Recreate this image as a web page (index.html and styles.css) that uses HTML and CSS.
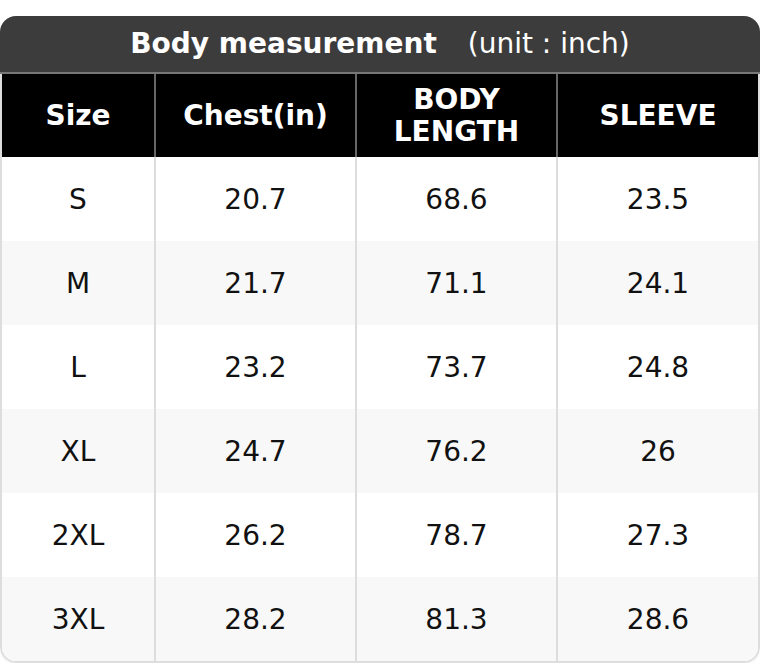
FILE: index.html
```html
<!DOCTYPE html>
<html>
<head>
<meta charset="utf-8">
<link rel="stylesheet" href="styles.css">
</head>
<body>
<div class="card">
  <div class="title"><span class="title-main">Body measurement</span><span class="title-unit">(unit : inch)</span></div>
  <div class="table">
    <div class="row head">
      <div class="cell">Size</div>
      <div class="cell">Chest(in)</div>
      <div class="cell">BODY<br>LENGTH</div>
      <div class="cell">SLEEVE</div>
    </div>
    <div class="row">
      <div class="cell">S</div><div class="cell">20.7</div><div class="cell">68.6</div><div class="cell">23.5</div>
    </div>
    <div class="row alt">
      <div class="cell">M</div><div class="cell">21.7</div><div class="cell">71.1</div><div class="cell">24.1</div>
    </div>
    <div class="row">
      <div class="cell">L</div><div class="cell">23.2</div><div class="cell">73.7</div><div class="cell">24.8</div>
    </div>
    <div class="row alt">
      <div class="cell">XL</div><div class="cell">24.7</div><div class="cell">76.2</div><div class="cell">26</div>
    </div>
    <div class="row">
      <div class="cell">2XL</div><div class="cell">26.2</div><div class="cell">78.7</div><div class="cell">27.3</div>
    </div>
    <div class="row alt">
      <div class="cell">3XL</div><div class="cell">28.2</div><div class="cell">81.3</div><div class="cell">28.6</div>
    </div>
  </div>
</div>
</body>
</html>
```
FILE: styles.css
```css
* { box-sizing: border-box; }
html, body { margin: 0; padding: 0; background: #fff; }
body {
  font-family: "DejaVu Sans", Verdana, sans-serif;
  padding-top: 16px;
}
.card {
  width: 760px;
  border-radius: 16px;
  overflow: hidden;
  box-shadow: 0 1px 2px rgba(0,0,0,0.08);
}
.title {
  height: 58px;
  background: #3c3c3c;
  border-bottom: 2px solid #777;
  color: #fff;
  font-size: 28px;
  display: flex;
  align-items: center;
  justify-content: center;
  padding-bottom: 2px;
}
.title-main { font-weight: bold; }
.title-unit { margin-left: 31px; }
.table {
  border-left: 2px solid #ddd;
  border-right: 2px solid #ddd;
  border-bottom: 2px solid #ddd;
  border-radius: 0 0 16px 16px;
  overflow: hidden;
}
.row {
  display: grid;
  grid-template-columns: 154px 201px 201px 200px;
  height: 84px;
  background: #fff;
  color: #111;
  font-size: 28px;
}
.row.alt { background: #f8f8f8; }
.cell {
  display: flex;
  align-items: center;
  justify-content: center;
  text-align: center;
  border-right: 2px solid #ddd;
}
.cell:last-child { border-right: none; }
.row.head {
  height: 83px;
  background: #000;
  color: #fff;
  font-weight: bold;
  line-height: 32px;
}
.row.head .cell { border-right-color: #666; }
.row.head .cell:last-child { border-right: none; }
```
